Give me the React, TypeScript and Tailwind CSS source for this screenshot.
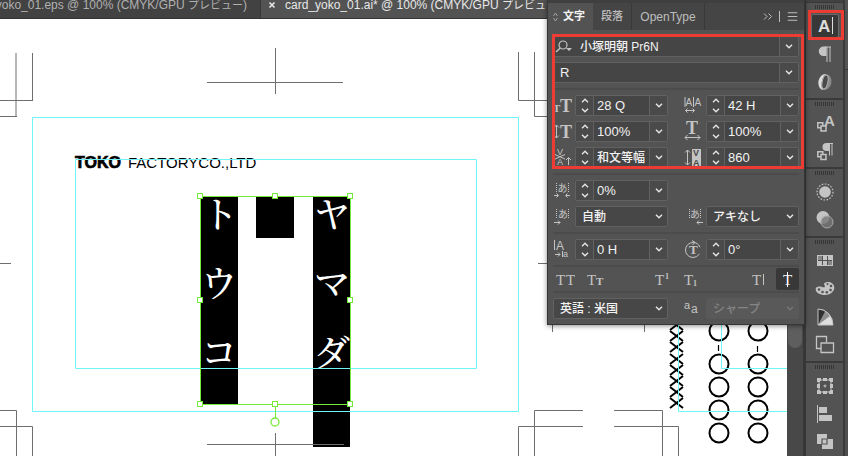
import type { ReactNode } from "react";
import { Menu } from "lucide-react";
import clsx from "clsx";

const UI_FONT = "font-['Liberation_Sans','Noto_Sans_CJK_JP',sans-serif]";
const SERIF = "'Liberation Serif', serif";
const SANS = "'Liberation Sans', 'Noto Sans CJK JP', sans-serif";

function Chevron({ up = false, className }: { up?: boolean; className?: string }) {
  return (
    <svg
      viewBox="0 0 8 5"
      className={clsx("h-[5px] w-2 fill-none stroke-current", className)}
      strokeWidth="1.4"
    >
      <path d={up ? "M1 4.2 4 1.2 7 4.2" : "M1 .8 4 3.8 7 .8"} />
    </svg>
  );
}

/* Character panel fields */

function SpinField({ label, value, cjk }: { label: string; value: string; cjk?: boolean }) {
  return (
    <div className="flex h-[21px] w-[93px] rounded-[2px] border border-[#616161] bg-[#454545] text-[#e6e6e6]">
      <div className="flex w-[18px] flex-col border-r border-[#616161] bg-[#4a4a4a] py-px">
        <button aria-label={`${label} up`} className="flex flex-1 items-start justify-center pt-px">
          <Chevron up />
        </button>
        <button aria-label={`${label} down`} className="flex flex-1 items-end justify-center pb-px">
          <Chevron />
        </button>
      </div>
      <input
        aria-label={label}
        defaultValue={value}
        className={clsx(
          "w-0 min-w-0 flex-1 pl-[3px] text-[#f2f2f2] outline-none",
          cjk ? "text-[12px] font-medium" : "text-[13px]"
        )}
      />
      <button
        aria-label={`${label} presets`}
        className="flex w-[18px] items-center justify-center border-l border-[#616161] bg-[#4a4a4a]"
      >
        <Chevron />
      </button>
    </div>
  );
}

function ComboField({ label, value, icon }: { label: string; value: string; icon?: ReactNode }) {
  return (
    <div className="flex h-[21px] rounded-[2px] border border-[#616161] bg-[#454545] text-[#e6e6e6]">
      {icon}
      <input
        aria-label={label}
        defaultValue={value}
        className={clsx(
          "w-0 min-w-0 flex-1 text-[#f2f2f2] outline-none",
          icon ? "pl-1 text-[12px] font-medium" : "pl-[6px] text-[13px]"
        )}
      />
      <button
        aria-label={`${label} list`}
        className="flex w-[19px] items-center justify-center border-l border-[#616161] bg-[#4a4a4a]"
      >
        <Chevron />
      </button>
    </div>
  );
}

function SelectField({
  label,
  value,
  disabled,
  wide,
}: {
  label: string;
  value: string;
  disabled?: boolean;
  wide?: boolean;
}) {
  return (
    <div className={clsx("relative", wide ? "w-[115px]" : "w-[93px]")}>
      <select
        aria-label={label}
        disabled={disabled}
        className={clsx(
          "block h-[21px] w-full appearance-none rounded-[2px] border pl-[6px] text-[12px] font-medium outline-none",
          disabled
            ? "border-[#595959] bg-[#595959] text-[#858585]"
            : "border-[#616161] bg-[#474747] text-[#f2f2f2]"
        )}
      >
        <option>{value}</option>
      </select>
      <Chevron
        className={clsx(
          "pointer-events-none absolute right-[5px] top-2",
          disabled ? "text-[#777777]" : "text-[#e6e6e6]"
        )}
      />
    </div>
  );
}

function Icon({ children }: { children: ReactNode }) {
  return (
    <svg
      viewBox="0 0 20 21"
      className="h-[21px] w-5 shrink-0 fill-none stroke-[#c4c4c4]"
      strokeWidth="1"
    >
      {children}
    </svg>
  );
}

function Letter({
  x,
  y,
  size,
  bold,
  sans,
  fill = "#c4c4c4",
  children,
}: {
  x: number;
  y: number;
  size: number;
  bold?: boolean;
  sans?: boolean;
  fill?: string;
  children: string;
}) {
  return (
    <text
      x={x}
      y={y}
      fontSize={size}
      fontFamily={sans ? SANS : SERIF}
      fontWeight={bold ? 700 : 400}
      fill={fill}
      stroke="none"
    >
      {children}
    </text>
  );
}

function FontSizeIcon() {
  return (
    <Icon>
      <Letter x={0} y={17} size={11} bold>T</Letter>
      <Letter x={7} y={17} size={18} bold>T</Letter>
    </Icon>
  );
}

function VerticalScaleIcon() {
  return (
    <Icon>
      <path d="M3.500 4v13M1 6.500 3.500 4 6 6.500M1 14.500 3.500 17 6 14.500" />
      <Letter x={7} y={17} size={18} bold>T</Letter>
    </Icon>
  );
}

function KerningIcon() {
  return (
    <Icon>
      <Letter x={4} y={8} size={9} sans>V</Letter>
      <Letter x={4} y={18} size={9} sans>A</Letter>
      <path d="M2 7.500 12 12M2 12l10-4.500M15.500 18v-7M13 13l2.500-2.500L18 13" />
    </Icon>
  );
}

function TrackingIcon() {
  return (
    <Icon>
      <Letter x={1.5} y={11} size={10} sans>A</Letter>
      <Letter x={10.5} y={11} size={10} sans>A</Letter>
      <path d="M1 2v10M9.500 2v10M1.500 15.500h9M3.500 13.500l-2 2 2 2M8.500 13.500l2 2-2 2" />
    </Icon>
  );
}

function HorizontalScaleIcon() {
  return (
    <Icon>
      <Letter x={2} y={13} size={18} bold>T</Letter>
      <path d="M1 16.500h15M3.500 14 1 16.500 3.500 19M13.500 14l2.500 2.500-2.500 2.500" />
    </Icon>
  );
}

function LeadingIcon() {
  return (
    <Icon>
      <path d="M3.500 3v15M1 5.500 3.500 3 6 5.500M1 15.500 3.500 18 6 15.500" />
      <path d="M8 2h9v18H8z" fill="#c4c4c4" stroke="none" />
      <Letter x={9} y={9} size={9} bold sans fill="#4a4a4a">V</Letter>
      <Letter x={9} y={19} size={9} bold sans fill="#4a4a4a">A</Letter>
    </Icon>
  );
}

function TsumeIcon() {
  return (
    <Icon>
      <Letter x={4.5} y={12} size={10} sans>あ</Letter>
      <path d="M3.500 3v10M15.500 3v10" strokeDasharray="1 1" />
      <path d="M1 15.500h4M3.500 13.500l2 2-2 2M17 15.500h-4M14.500 13.500l-2 2 2 2" />
    </Icon>
  );
}

function AkiBeforeIcon() {
  return (
    <Icon>
      <Letter x={5} y={12} size={10} sans>あ</Letter>
      <path d="M3.500 3v10M15.500 3v10" strokeDasharray="1 1" />
      <path d="M1 16.500h6M5 14.500l2 2-2 2" />
    </Icon>
  );
}

function AkiAfterIcon() {
  return (
    <Icon>
      <Letter x={6} y={12} size={10} sans>あ</Letter>
      <path d="M5.500 3v10M16.500 3v10" strokeDasharray="1 1" />
      <path d="M19 16.500h-6M15 14.500l-2 2 2 2" />
    </Icon>
  );
}

function BaselineShiftIcon() {
  return (
    <Icon>
      <Letter x={3} y={11} size={12} sans>A</Letter>
      <path d="M1.500 1v10M2 15.500h5M5 13.500l2 2-2 2M9.500 12v6" />
      <Letter x={10} y={18} size={9} sans>a</Letter>
    </Icon>
  );
}

function RotationIcon() {
  return (
    <Icon>
      <circle cx="9" cy="11" r="7.500" strokeDasharray="40 7" strokeDashoffset="-4" />
      <path d="M8 1.500 11 3.500 8.500 6" />
      <Letter x={5} y={15} size={13} bold>T</Letter>
    </Icon>
  );
}

function AntiAliasIcon() {
  return (
    <Icon>
      <Letter x={0} y={11} size={11} sans>a</Letter>
      <Letter x={7} y={15} size={12} sans>a</Letter>
    </Icon>
  );
}

function Divider() {
  return <div className="my-[5px] h-[2px] bg-[#4b4b4b]" />;
}

function Cell({ icon, children }: { icon: ReactNode; children: ReactNode }) {
  return (
    <div className="flex w-[115px] items-center justify-between">
      {icon}
      {children}
    </div>
  );
}

function StyleButton({
  label,
  active,
  children,
}: {
  label: string;
  active?: boolean;
  children: ReactNode;
}) {
  return (
    <button
      aria-label={label}
      aria-pressed={active}
      className={clsx(
        "flex h-[22px] w-[23px] items-center justify-center rounded-[2px]",
        active && "bg-[#383838]"
      )}
    >
      <Icon>{children}</Icon>
    </button>
  );
}

function CharacterPanel() {
  return (
    <section
      aria-label="文字"
      className="absolute right-[43px] top-0 w-[258px] border border-t-0 border-[#363636] bg-[#535353] shadow-[0_1px_5px_rgba(0,0,0,0.45)]"
    >
      <div className="h-[3px] bg-[#3f3f3f]" />
      <div className="flex h-[27px] bg-[#454545] text-[12px] text-[#bdbdbd]">
        <button className="flex w-[45px] items-center gap-[5px] bg-[#535353] pl-[5px] text-[11px] font-bold text-[#f2f2f2]">
          <svg viewBox="0 0 5 10" className="h-[10px] w-[5px] fill-none stroke-[#a0a0a0]">
            <path d="M.500 4 2.500 1l2 3M.500 6l2 3 2-3" />
          </svg>
          文字
        </button>
        <button className="w-[39px] border-r border-[#393939] text-[11px] font-medium">段落</button>
        <button className="w-[73px] border-r border-[#393939]">OpenType</button>
        <div className="flex flex-1 items-center justify-end gap-[6px] pr-[5px]">
          <button aria-label="Collapse">
            <svg viewBox="0 0 10 7" className="h-[7px] w-[10px] fill-none stroke-[#bdbdbd]">
              <path d="M1 .500 4 3.500 1 6.500M5.500 .500l3 3-3 3" />
            </svg>
          </button>
          <span className="h-[11px] w-px bg-[#bdbdbd]" />
          <button aria-label="Panel menu">
            <Menu className="size-[13px]" strokeWidth={2} />
          </button>
        </div>
      </div>

      <div className="px-[5px] pb-[5px] pt-[6px]">
        <div className="flex flex-col gap-[5px]">
          <ComboField
            label="フォント"
            value="小塚明朝 Pr6N"
            icon={
              <svg viewBox="0 0 22 19" className="h-[19px] w-[22px] fill-none stroke-[#c4c4c4]">
                <circle cx="9" cy="8" r="4" strokeWidth="1.200" />
                <path d="M6.200 11 2 15" strokeWidth="1.400" />
                <path d="M12 11h6l-3 3z" fill="#c4c4c4" stroke="none" />
              </svg>
            }
          />
          <ComboField label="スタイル" value="R" />
        </div>
        <Divider />
        <div className="flex flex-wrap justify-between gap-y-[5px]">
          <Cell icon={<FontSizeIcon />}>
            <SpinField label="フォントサイズ" value="28 Q" />
          </Cell>
          <Cell icon={<TrackingIcon />}>
            <SpinField label="行送り" value="42 H" />
          </Cell>
          <Cell icon={<VerticalScaleIcon />}>
            <SpinField label="垂直比率" value="100%" />
          </Cell>
          <Cell icon={<HorizontalScaleIcon />}>
            <SpinField label="水平比率" value="100%" />
          </Cell>
          <Cell icon={<KerningIcon />}>
            <SpinField label="カーニング" value="和文等幅" cjk />
          </Cell>
          <Cell icon={<LeadingIcon />}>
            <SpinField label="トラッキング" value="860" />
          </Cell>
        </div>
        <Divider />
        <div className="flex flex-wrap justify-between gap-y-[5px]">
          <div className="w-full">
            <Cell icon={<TsumeIcon />}>
              <SpinField label="文字ツメ" value="0%" />
            </Cell>
          </div>
          <Cell icon={<AkiBeforeIcon />}>
            <SelectField label="アキを挿入(左)" value="自動" />
          </Cell>
          <Cell icon={<AkiAfterIcon />}>
            <SelectField label="アキを挿入(右)" value="アキなし" />
          </Cell>
        </div>
        <Divider />
        <div className="flex justify-between">
          <Cell icon={<BaselineShiftIcon />}>
            <SpinField label="ベースラインシフト" value="0 H" />
          </Cell>
          <Cell icon={<RotationIcon />}>
            <SpinField label="文字回転" value="0°" />
          </Cell>
        </div>
        <div className="mt-[5px] h-[2px] bg-[#4b4b4b]" />
        <div className="my-px flex justify-between">
          <div className="flex gap-2">
            <StyleButton label="オールキャップス">
              <Letter x={1} y={16} size={15}>T</Letter>
              <Letter x={11} y={16} size={15}>T</Letter>
            </StyleButton>
            <StyleButton label="スモールキャップス">
              <Letter x={1} y={16} size={15}>T</Letter>
              <Letter x={10} y={16} size={11} bold>T</Letter>
            </StyleButton>
          </div>
          <div className="flex gap-[6px]">
            <StyleButton label="上付き文字">
              <Letter x={2} y={16} size={15}>T</Letter>
              <Letter x={12} y={10} size={8} bold>1</Letter>
            </StyleButton>
            <StyleButton label="下付き文字">
              <Letter x={2} y={16} size={15}>T</Letter>
              <Letter x={11} y={17} size={8} bold>1</Letter>
            </StyleButton>
          </div>
          <div className="flex gap-[6px]">
            <StyleButton label="下線">
              <Letter x={3} y={16} size={15}>T</Letter>
              <path d="M14.500 5v11" />
            </StyleButton>
            <StyleButton label="打ち消し線" active>
              <Letter x={5} y={16} size={15} fill="#ffffff">T</Letter>
              <path d="M9.500 3v15" stroke="#ffffff" />
            </StyleButton>
          </div>
        </div>
        <div className="mb-[5px] h-[2px] bg-[#4b4b4b]" />
        <div className="flex justify-between">
          <SelectField label="言語" value="英語 : 米国" wide />
          <Cell icon={<AntiAliasIcon />}>
            <SelectField label="アンチエイリアス" value="シャープ" disabled />
          </Cell>
        </div>
      </div>

      <div className="pointer-events-none absolute left-1 right-0 top-[34px] h-[135px] border-[3px] border-[#ec3c34]" />
    </section>
  );
}

/* Artboard drawing */

const CROP_MARKS = [
  "M0 100.500H33M32.500 53V101M0 116.500H17M16 53V117",
  "M207 82.500H343M275.500 48V94",
  "M518.500 52V100.500H560M534.500 52V116.500H560",
  "M0 263.500H11M538 263.500H560",
  "M0 410.500H16.500V456M0 426.500H32.500V456",
  "M583 410.500H534.500V456M583 426.500H518.500V456",
  "M614 410.500H662.500V456M614 426.500H678.500V456",
  "M552.500 320V332M644.500 320V332",
  "M207 444.500H344M275.500 433V456",
];
const CROSSES = [325, 336, 347, 359, 370, 381, 392, 403];
const CIRCLE_ROWS = [331, 364, 387, 410, 433];
const CIRCLE_COLS = [719, 758];
const HANDLES = [
  [200.5, 196.5], [275.5, 196.5], [350.5, 196.5],
  [200.5, 300.5], [350.5, 300.5],
  [200.5, 404.5], [275.5, 404.5], [350.5, 404.5],
];
const NAME = [
  { char: "ヤ", x: 332, y: 228 },
  { char: "マ", x: 332, y: 297 },
  { char: "ダ", x: 332, y: 366 },
  { char: "ト", x: 220, y: 228 },
  { char: "ウ", x: 219, y: 297 },
  { char: "コ", x: 219, y: 366 },
];

function Artwork() {
  return (
    <svg
      viewBox="0 19 787 437"
      width="787"
      height="437"
      fill="none"
      className="block max-w-none"
    >
      <g fill="#000">
        <path d="M201 197h37v207h-37zM256 197h38v41h-38zM313 197h37v250h-37z" />
        <text
          x="75"
          y="168"
          fontSize="16"
          fontWeight="700"
          fontFamily={SANS}
          stroke="#000"
          strokeWidth=".700"
        >
          TOKO
        </text>
        <text x="128" y="168" fontSize="15" fontFamily={SANS}>
          FACTORYCO.,LTD
        </text>
      </g>
      <g
        fill="#fff"
        fontSize="36"
        fontWeight="500"
        textAnchor="middle"
        fontFamily="'Noto Serif CJK JP', 'Noto Sans CJK JP', serif"
      >
        {NAME.map(({ char, x, y }) => (
          <text key={char} x={x} y={y}>
            {char}
          </text>
        ))}
      </g>

      <path d={CROP_MARKS.join("")} stroke="#6e6e6e" />

      <g stroke="#000" strokeWidth="2">
        {CROSSES.map((y) => (
          <path key={y} d={`M670 ${y - 5}l13 10M683 ${y - 5}l-13 10`} />
        ))}
        {CIRCLE_COLS.map((cx) =>
          CIRCLE_ROWS.map((cy) => <circle key={`${cx}-${cy}`} cx={cx} cy={cy} r="9.500" />)
        )}
        <path d="M718.500 345v6M757.500 346v6" strokeWidth="1.200" />
      </g>

      <g stroke="#6ff5f8">
        <path d="M32.500 117.500h486v294h-486z" />
        <path d="M75.500 159.500h401v209h-401z" />
        <path d="M678.500 320v91.500H787M721.500 320v48.500H787" />
      </g>

      <g stroke="#76ea3c">
        <path d="M200.500 196.500h150v208h-150zM275.500 404v14" />
        {HANDLES.map(([x, y]) => (
          <rect key={`${x}-${y}`} x={x - 3} y={y - 3} width="5" height="5" fill="#fff" />
        ))}
        <circle cx="275" cy="422" r="4" fill="#fff" strokeWidth="1.300" />
      </g>
    </svg>
  );
}

/* Icon dock */

function DockButton({
  label,
  active,
  children,
}: {
  label: string;
  active?: boolean;
  children: ReactNode;
}) {
  return (
    <button aria-label={label} className="flex h-7 w-full items-center justify-center">
      <span
        className={clsx(
          "flex h-6 w-7 items-center justify-center",
          active && "rounded-[2px] border border-[#6a6a6a] bg-[#383838]"
        )}
      >
        <svg viewBox="0 0 22 22" className="size-[22px] shrink-0 fill-none stroke-[#c4c4c4]">
          {children}
        </svg>
      </span>
    </button>
  );
}

function DockGroup({ first, children }: { first?: boolean; children: ReactNode }) {
  return (
    <div
      className={clsx(
        "flex flex-col items-center pb-[2px] pt-[2px]",
        !first && "border-t-2 border-[#3a3a3a]"
      )}
    >
      <div className="mb-[3px] h-1 w-[19px] bg-[repeating-linear-gradient(90deg,#363636_0_1px,#535353_1px_2px)]" />
      {children}
    </div>
  );
}

function Dock() {
  return (
    <aside className="relative w-[37px] shrink-0 bg-[#535353]">
      <div className="h-[3px] border-b border-[#383838] bg-[#424242]" />
      <DockGroup first>
        <DockButton label="文字" active>
          <Letter x={4} y={17} size={17} bold sans fill="#dddddd">A</Letter>
          <path d="M18.500 2v17" stroke="#dddddd" />
        </DockButton>
        <DockButton label="段落">
          <path d="M11 4h6M13 4v15M16 4v15" />
          <path d="M12.500 3.500H9.500a4.800 4.800 0 0 0 0 9.600h3z" fill="#c4c4c4" stroke="none" />
        </DockButton>
        <DockButton label="OpenType">
          <ellipse cx="11" cy="11" rx="6.500" ry="8" transform="rotate(12 11 11)" fill="#8a8a8a" stroke="none" />
          <path
            d="M12.500 3C7 3 4 8 4.500 13c.3 3.800 2.200 5.800 4.800 6-2.300-2-2.200-5-1.500-8.500C8.500 6.500 10 3.800 12.500 3z"
            fill="#dddddd"
            stroke="none"
          />
          <ellipse cx="11" cy="11" rx="2.800" ry="7" transform="rotate(12 11 11)" fill="#4a4a4a" stroke="#b0b0b0" />
        </DockButton>
      </DockGroup>
      <DockGroup>
        <DockButton label="文字スタイル">
          <Letter x={10} y={14} size={15} bold sans>A</Letter>
          <path d="M3.800 10.800h5v5h-5z" strokeWidth="1.500" />
          <path d="M7 14h5v5H7z" fill="#535353" strokeWidth="1.500" />
        </DockButton>
        <DockButton label="段落スタイル">
          <path d="M13 3.500h6M15.500 3.500v12M18 3.500v12" />
          <path d="M15 3h-2.500a4 4 0 0 0 0 8H15z" fill="#c4c4c4" stroke="none" />
          <path d="M3.800 11.800h5v5h-5z" strokeWidth="1.500" />
          <path d="M7 14.500h5v5H7z" fill="#535353" strokeWidth="1.500" />
        </DockButton>
      </DockGroup>
      <DockGroup>
        <DockButton label="アピアランス">
          <circle cx="11" cy="11" r="5.800" fill="#c4c4c4" stroke="none" />
          <circle cx="11" cy="11" r="8" strokeWidth="1.200" strokeDasharray="1.600 1.500" />
        </DockButton>
        <DockButton label="透明">
          <circle cx="9" cy="8.500" r="6.500" fill="#c4c4c4" stroke="none" />
          <circle cx="13" cy="13" r="6" fill="#777777" fillOpacity=".8" stroke="#a8a8a8" />
        </DockButton>
      </DockGroup>
      <DockGroup>
        <DockButton label="スウォッチ">
          <path d="M3 5h16v11H3z" fill="#c4c4c4" stroke="none" />
          <path d="M4 6h4v4H4zM14 11h4v4h-4z" fill="#888888" stroke="none" />
          <path d="M8.500 5v11M13.500 5v11M3 10.500h16" stroke="#535353" />
          <path d="M3.500 5.500h15v10h-15z" />
        </DockButton>
        <DockButton label="ブラシ">
          <path
            d="M13 4c4-.6 7.500 2 7.300 5.800C20 14.500 15.500 17 11 17c-5 0-9-2.300-9.300-5.500C1.500 8.500 5 8 8 9c2.600.8 3.600-.2 2.500-1.800C9.300 5.500 11 4.300 13 4z"
            fill="#c4c4c4"
            stroke="none"
          />
          <g fill="#535353" stroke="none">
            <circle cx="5" cy="11.500" r="1.300" />
            <circle cx="8.500" cy="14" r="1.300" />
            <circle cx="12.800" cy="14.300" r="1.300" />
            <circle cx="16.500" cy="12" r="1.300" />
            <circle cx="17" cy="8" r="1.300" />
            <circle cx="13.500" cy="6" r="1.100" />
          </g>
        </DockButton>
        <DockButton label="カラーガイド">
          <path d="M4 3v16h15A15 16 0 0 0 4 3z" fill="#dedede" stroke="none" />
          <path d="M4 19V3a15 16 0 0 1 12 7z" fill="#8e8e8e" stroke="none" />
          <path d="M4 19V3a15 16 0 0 1 7 2.500z" fill="#303030" stroke="none" />
          <path d="M4 3v16h15A15 16 0 0 0 4 3z" />
        </DockButton>
        <DockButton label="グラフィックスタイル">
          <path d="M7.500 14.500h-5v-12h10v6" strokeWidth="1.300" />
          <path d="M7 9h12.500v9.500H7z" strokeWidth="1.300" />
        </DockButton>
      </DockGroup>
      <DockGroup>
        <DockButton label="変形">
          <path d="M5 5h12v12H5z" />
          <g fill="#c4c4c4" stroke="none">
            <path d="M3 3h4v4H3zM9 3h4v4H9zM15 3h4v4h-4zM3 9h4v4H3zM15 9h4v4h-4zM3 15h4v4H3zM9 15h4v4H9zM15 15h4v4h-4z" />
          </g>
          <path d="M6 6h10v10H6z" fill="#535353" stroke="none" />
          <path d="M11 9.500v3M9.500 11h3" />
        </DockButton>
        <DockButton label="整列">
          <path d="M3.500 2v18" />
          <path d="M5 4h8v6H5zM5 12h13v6H5z" fill="#c4c4c4" stroke="none" />
        </DockButton>
        <DockButton label="パスファインダー">
          <path d="M3 3h10v10H3zM8 8h11v10H8z" fill="#c4c4c4" stroke="none" />
          <path d="M8 8h5v5H8z" fill="#c4c4c4" stroke="#535353" strokeWidth="1.200" />
        </DockButton>
      </DockGroup>
      <div className="pointer-events-none absolute left-[2px] top-[10px] h-[30px] w-9 border-[3px] border-[#ec3c34]" />
    </aside>
  );
}

function DocumentTabs() {
  return (
    <div className="flex h-[19px] overflow-hidden whitespace-nowrap border-b border-[#333333] bg-[#424242] text-[12px] leading-[10px]">
      <button className="flex w-[261px] shrink-0 items-start justify-end border-r border-[#383838] pr-[13px] text-[#b0b0b0]">
        <span>
          card_yoko_01.eps @ 100% (CMYK/GPU <span className="text-[11px]">プレビュー</span>)
        </span>
      </button>
      <div className="flex flex-1 items-start bg-[#535353] pl-[7px] text-[#e8e8e8]">
        <button aria-label="Close" className="pt-px">
          <svg viewBox="0 0 8 8" className="size-2 stroke-current" strokeWidth="1.600">
            <path d="M1.500 1.500l5 5M6.500 1.500l-5 5" />
          </svg>
        </button>
        <button className="pl-[9px]">
          card_yoko_01.ai* @ 100% (CMYK/GPU <span className="text-[11px]">プレビュー</span>)
        </button>
      </div>
    </div>
  );
}

export default function App() {
  return (
    <div className={clsx("relative flex h-screen overflow-hidden bg-[#3a3a3a]", UI_FONT)}>
      <main className="flex min-w-0 flex-1 flex-col">
        <DocumentTabs />
        <div className="flex min-h-0 flex-1">
          <div className="min-w-0 flex-1 overflow-hidden bg-white">
            <Artwork />
          </div>
          <div className="w-4 bg-[#484848] px-px">
            <div className="h-[329px] rounded-full bg-[#5e5e5e]" />
          </div>
        </div>
      </main>
      <div className="w-[3px] shrink-0 bg-[#373737]" />
      <Dock />
      <div className="ml-[2px] w-[3px] shrink-0 bg-[#4e4e4e]">
        <div className="h-[70px] border-b border-[#383838] bg-[#535353]" />
      </div>
      <CharacterPanel />
    </div>
  );
}
